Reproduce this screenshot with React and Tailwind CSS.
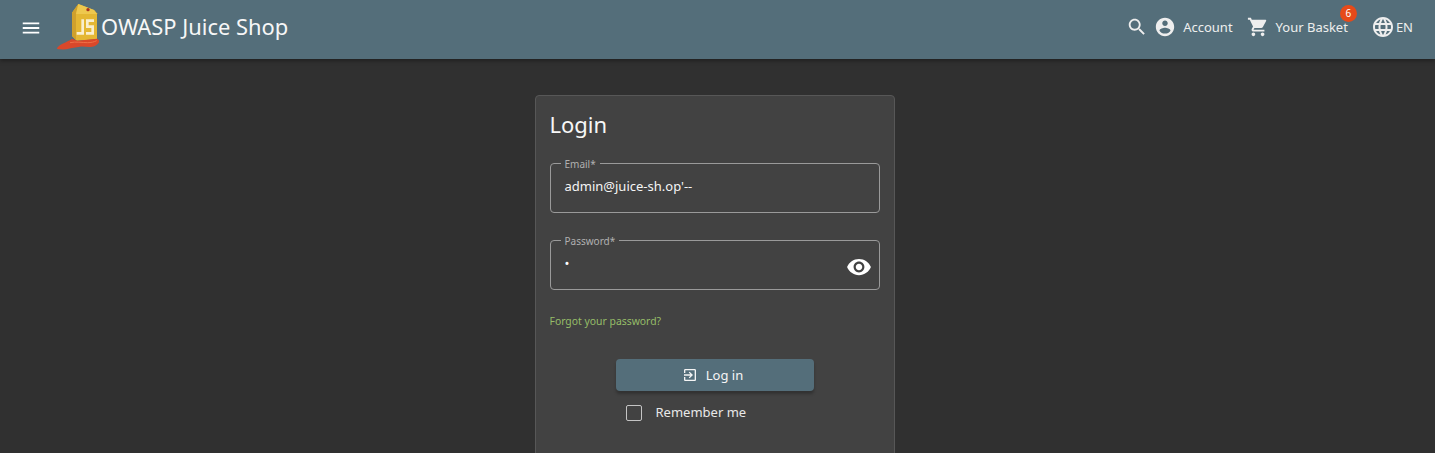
const Icon = ({ d, className }) => (
  <svg viewBox="0 0 24 24" fill="currentColor" className={className}><path d={d} /></svg>
);
const P = {
  menu: "M3 18h18v-2H3v2zm0-5h18v-2H3v2zm0-7v2h18V6H3z",
  search: "M15.5 14h-.79l-.28-.27C15.41 12.59 16 11.11 16 9.5 16 5.91 13.09 3 9.5 3S3 5.91 3 9.5 5.91 16 9.5 16c1.61 0 3.09-.59 4.23-1.57l.27.28v.79l5 4.99L20.49 19l-4.99-5zm-6 0C7.01 14 5 11.99 5 9.5S7.01 5 9.5 5 14 7.01 14 9.5 11.99 14 9.5 14z",
  account: "M12 2C6.48 2 2 6.48 2 12s4.48 10 10 10 10-4.48 10-10S17.52 2 12 2zm0 3c1.66 0 3 1.34 3 3s-1.34 3-3 3-3-1.34-3-3 1.34-3 3-3zm0 14.2c-2.5 0-4.71-1.28-6-3.22.03-1.99 4-3.08 6-3.08 1.99 0 5.97 1.09 6 3.08-1.29 1.94-3.5 3.22-6 3.22z",
  cart: "M7 18c-1.1 0-1.99.9-1.99 2S5.9 22 7 22s2-.9 2-2-.9-2-2-2zM1 2v2h2l3.6 7.59-1.35 2.45c-.16.28-.25.61-.25.96 0 1.1.9 2 2 2h12v-2H7.42c-.14 0-.25-.11-.25-.25l.03-.12.9-1.63h7.45c.75 0 1.41-.41 1.75-1.03l3.58-6.49c.08-.14.12-.31.12-.48 0-.55-.45-1-1-1H5.21l-.94-2H1zm16 16c-1.1 0-1.99.9-1.99 2s.89 2 1.99 2 2-.9 2-2-.9-2-2-2z",
  language: "M11.99 2C6.47 2 2 6.48 2 12s4.47 10 9.99 10C17.52 22 22 17.52 22 12S17.52 2 11.99 2zm6.93 6h-2.95c-.32-1.25-.78-2.45-1.38-3.56 1.84.63 3.37 1.91 4.33 3.56zM12 4.04c.83 1.2 1.48 2.53 1.91 3.96h-3.82c.43-1.43 1.08-2.76 1.91-3.96zM4.26 14C4.1 13.36 4 12.69 4 12s.1-1.36.26-2h3.38c-.08.66-.14 1.32-.14 2 0 .68.06 1.34.14 2H4.26zm.82 2h2.95c.32 1.25.78 2.45 1.38 3.56-1.84-.63-3.37-1.9-4.33-3.56zm2.95-8H5.08c.96-1.66 2.49-2.93 4.33-3.56C8.81 5.55 8.35 6.75 8.03 8zM12 19.96c-.83-1.2-1.48-2.53-1.91-3.96h3.82c-.43 1.43-1.08 2.76-1.91 3.96zM14.34 14H9.66c-.09-.66-.16-1.32-.16-2 0-.68.07-1.35.16-2h4.68c.09.65.16 1.32.16 2 0 .68-.07 1.34-.16 2zm.25 5.56c.6-1.11 1.06-2.31 1.38-3.56h2.95c-.96 1.65-2.49 2.93-4.33 3.56zM16.36 14c.08-.66.14-1.32.14-2 0-.68-.06-1.34-.14-2h3.38c.16.64.26 1.31.26 2s-.1 1.36-.26 2h-3.38z",
  eye: "M12 4.5C7 4.5 2.73 7.61 1 12c1.73 4.39 6 7.5 11 7.5s9.27-3.11 11-7.5c-1.73-4.39-6-7.5-11-7.5zM12 17c-2.76 0-5-2.24-5-5s2.24-5 5-5 5 2.24 5 5-2.24 5-5 5zm0-8c-1.66 0-3 1.34-3 3s1.34 3 3 3 3-1.34 3-3-1.34-3-3-3z",
  exit: "M10.09 15.59L11.5 17l5-5-5-5-1.41 1.41L12.67 11H3v2h9.67l-2.58 2.59zM19 3H5c-1.11 0-2 .9-2 2v4h2V5h14v14H5v-4H3v4c0 1.1.89 2 2 2h14c1.1 0 2-.9 2-2V5c0-1.1-.9-2-2-2z",
};

const Logo = () => (
  <svg viewBox="0 0 180 168" className="w-[60px] h-[56px] shrink-0">
    <path d="M85 12 L66 38 L66 108 L80 122 L141 118 L141 40 L132 30Z" fill="#e4b733" />
    <path d="M85 12 L66 38 L66 108 L78 120 L78 42Z" fill="#cfa02c" />
    <path d="M85 12 L132 30 L141 42 L78 42Z" fill="#eec84e" />
    <circle cx="114" cy="29" r="5" fill="#a8321e" />
    <path d="M21 145 C26 132 50 128 66 116 L82 122 L141 116 C150 120 150 130 136 137 C120 145 104 138 90 140 C68 142 50 150 30 148 C24 148 20 147 21 145Z" fill="#d9482a" />
    <path d="M60 128 C78 124 96 128 112 128 C124 128 132 126 140 122" fill="none" stroke="#ee7048" strokeWidth="3" />
    <path d="M94 58 H102 V104 H80 V96 H94Z M108 58 H132 V66 H116 V76 H132 V104 H108 V96 H124 V84 H108Z" fill="#f9efcf" />
  </svg>
);

const Field = ({ label, value, children }) => (
  <div className="relative h-[50px] rounded-[4px] border border-[#9a9a9a] flex items-center pl-[14px] pr-[7px]">
    <span className="absolute -top-[6px] left-[10px] bg-[#424242] px-[4px] text-[10px] leading-[12px] text-[#b0b0b0]">{label}</span>
    {children || <span className="text-[13px] text-[#f5f5f5] -mt-[3px]">{value}</span>}
  </div>
);

export default function App() {
  return (
    <div className="h-[453px] overflow-hidden bg-[#303030] text-white" style={{ fontFamily: '"Noto Sans", sans-serif' }}>
      <header className="relative z-10 h-[59px] bg-[#546e7a] flex items-center pl-[20px] pr-[22px] shadow-[0_2px_4px_rgba(0,0,0,0.35)]">
        <Icon d={P.menu} className="w-[22px] h-[22px] -mt-[3px] mr-[8px]" />
        <div className="-mt-[3px]"><Logo /></div>
        <span className="-ml-[9px] text-[21.9px] leading-[30px] -mt-[6px] text-[#f7f7f7]">OWASP Juice Shop</span>
        <div className="ml-auto flex items-center text-[#eeeeee] -mt-[4px]">
          <Icon d={P.search} className="w-[22px] h-[22px] -mt-[1px]" />
          <Icon d={P.account} className="w-[22px] h-[22px] -mt-[1px] ml-[6px]" />
          <span className="ml-[7px] text-[13px]">Account</span>
          <Icon d={P.cart} className="w-[22px] h-[22px] -mt-[1px] ml-[14px]" />
          <span className="ml-[7px] text-[13px] relative">
            Your Basket
            <span className="absolute -top-[13px] -right-[9px] w-[17px] h-[17px] rounded-full bg-[#e64a19] text-[10px] leading-[17px] text-center text-white">6</span>
          </span>
          <Icon d={P.language} className="w-[24px] h-[24px] -mt-[1px] ml-[23px]" />
          <span className="ml-[1px] text-[13px]">EN</span>
        </div>
      </header>
      <main className="flex justify-center pt-[36px] pr-[6px]">
        <div className="w-[360px] h-[500px] bg-[#424242] rounded-[4px] border border-[#575757] px-[14px] shrink-0">
          <h1 className="text-[22px] leading-[30px] mt-[13px] font-normal text-[#f7f7f7]">Login</h1>
          <div className="mt-[24px]">
            <Field label="Email*" value="admin@juice-sh.op'--" />
          </div>
          <div className="mt-[27px]">
            <Field label="Password*">
              <span className="flex-1 text-[13px] text-white -mt-[3px]">•</span>
              <Icon d={P.eye} className="w-[26px] h-[26px] mt-[4px]" />
            </Field>
          </div>
          <a className="block mt-[24px] text-[10.4px] leading-[14px] text-[#96bd68]">Forgot your password?</a>
          <button className="mx-auto mt-[31px] w-[198px] h-[32px] rounded-[4px] bg-[#546e7a] flex items-center justify-center gap-[8px] pr-[4px] text-[13px] text-[#f5f5f5] shadow-[0_3px_3px_rgba(0,0,0,0.25)]">
            <Icon d={P.exit} className="w-[16px] h-[16px]" />
            <span className="mt-[1px]">Log in</span>
          </button>
          <label className="flex items-center ml-[76px] mt-[12px] text-[13px] text-[#e8e8e8]">
            <span className="w-[16px] h-[16px] rounded-[2px] border border-[#c4c4c4]" />
            <span className="ml-[14px]">Remember me</span>
          </label>
        </div>
      </main>
    </div>
  );
}
